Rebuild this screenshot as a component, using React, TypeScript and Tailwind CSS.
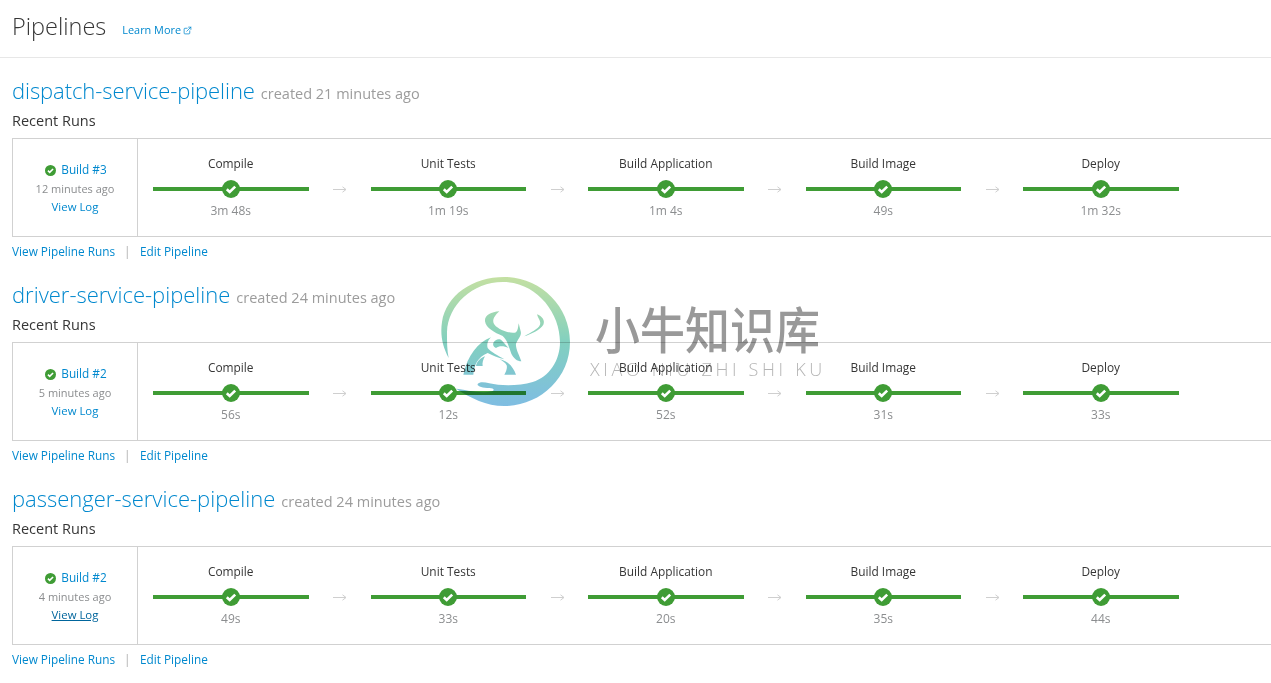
import { ExternalLink } from "lucide-react";

const pipelines = [
  {
    name: "dispatch-service-pipeline",
    created: "created 21 minutes ago",
    build: "Build #3",
    ago: "12 minutes ago",
    times: ["3m 48s", "1m 19s", "1m 4s", "49s", "1m 32s"],
    titleClass: "tracking-[-0.08px]",
  },
  {
    name: "driver-service-pipeline",
    created: "created 24 minutes ago",
    build: "Build #2",
    ago: "5 minutes ago",
    times: ["56s", "12s", "52s", "31s", "33s"],
  },
  {
    name: "passenger-service-pipeline",
    created: "created 24 minutes ago",
    build: "Build #2",
    ago: "4 minutes ago",
    times: ["49s", "33s", "20s", "35s", "44s"],
    hoverLog: true,
  },
];

const stages = ["Compile", "Unit Tests", "Build Application", "Build Image", "Deploy"];

function Check({ size }: { size: number }) {
  return (
    <svg width={size} height={size} viewBox="0 0 18 18" className="block shrink-0">
      <circle cx="9" cy="9" r="9" fill="#3f9c35" />
      <path d="M4.8 9.2 L7.7 12 L13.2 6.6" fill="none" stroke="#fff" strokeWidth="2.6" />
    </svg>
  );
}

function Stage({ name, time }: { name: string; time: string }) {
  return (
    <div className="w-[155.5px] shrink-0 flex flex-col items-center">
      <div className="text-[11.9px] leading-[16px] text-[#363636] h-[18px] whitespace-nowrap">{name}</div>
      <div className="relative w-full h-[18px] mt-[7px] flex items-center justify-center">
        <div className="absolute left-0 right-0 top-[7px] h-[4px] bg-[#3f9c35]" />
        <div className="relative">
          <Check size={18} />
        </div>
      </div>
      <div className="text-[12px] leading-[18px] text-[#8b8d8f] mt-[4px]">{time}</div>
    </div>
  );
}

function Arrow() {
  return (
    <div className="w-[62px] shrink-0 flex justify-center pt-[25px]">
      <svg width="15" height="18" viewBox="0 0 15 18">
        <path d="M1 9.5 H14 M10.5 6.8 L14 9.5 L10.5 12.2" fill="none" stroke="#cfcfcf" strokeWidth="1" />
      </svg>
    </div>
  );
}

function Watermark() {
  return (
    <div className="absolute left-[441px] top-[277px] w-[400px] h-[130px] pointer-events-none mix-blend-multiply">
      <svg width="130" height="130" viewBox="15 15 390 390" className="absolute left-0 top-0">
        <defs>
          <linearGradient id="ring" gradientUnits="userSpaceOnUse" x1="0" y1="15" x2="0" y2="402">
            <stop offset="0" stopColor="#c4e0a2" />
            <stop offset="0.5" stopColor="#82d0bf" />
            <stop offset="1" stopColor="#7fbde2" />
          </linearGradient>
        </defs>
        <g fill="url(#ring)">
          {/* ring with the hand at the bottom */}
          <path d="M38 258 C20 225 12 190 18 150 C30 70 110 15 205 15 C310 15 402 100 402 210 C402 320 310 402 205 402 C150 402 105 378 60 350 C85 352 130 366 168 358 C178 354 172 348 160 348 C140 348 122 342 125 336 C130 329 145 330 160 334 C195 342 250 342 290 330 C340 315 372 265 372 210 C372 120 300 30 200 30 C110 30 35 100 33 180 C33 210 33 235 38 258 Z" />
          {/* bull head with left horn */}
          <path d="M190 118 C165 120 145 130 147 148 C150 168 175 182 200 192 C215 205 218 225 226 245 C232 258 244 268 256 268 C250 250 238 230 240 215 C246 200 258 190 254 178 L248 154 C246 165 246 175 240 181 C228 186 205 178 190 170 C172 160 160 145 190 118 Z" />
          {/* right horn flick */}
          <path d="M303 127 C318 132 328 146 322 158 C312 174 285 186 265 193 C285 180 306 172 312 158 C316 148 306 140 303 127 Z" />
          {/* chest */}
          <path d="M172 212 C178 202 190 198 198 206 C206 214 212 222 218 228 C205 222 190 220 180 228 C172 224 170 218 172 212 Z" />
          {/* body arch and legs */}
          <path d="M165 196 C125 212 95 250 82 308 L112 308 C114 280 125 255 155 243 C170 250 185 258 205 262 C185 250 165 240 155 228 C152 218 155 205 165 196 Z" />
          <path d="M147 253 C132 258 122 270 120 282 L140 282 C138 272 142 262 147 253 Z" />
          <path d="M190 262 C215 266 232 285 240 308 L205 308 C212 296 214 286 212 280 C208 272 198 266 190 262 Z" />
        </g>
      </svg>
      <div
        className="absolute left-[154px] top-[16px] text-[45px] leading-[64px] text-[#999999] whitespace-nowrap font-medium origin-top scale-y-[1.1]"
        style={{ fontFamily: '"Noto Sans CJK SC", sans-serif' }}
      >
        小牛知识库
      </div>
      <div className="absolute left-[149px] top-[80px] text-[18px] leading-[24px] tracking-[3.65px] text-[#b5b5b5] whitespace-nowrap font-light">
        XIAO NIU ZHI SHI KU
      </div>
    </div>
  );
}

export default function App() {
  return (
    <div className="relative w-[1271px] h-[683px] overflow-hidden bg-white font-['Open_Sans',sans-serif]">
      <div className="h-[58px] border-b border-[#e7e7e7] pl-[12px] flex items-start">
        <h1 className="text-[23.5px] leading-[26px] font-light text-[#363636] mt-[13px]">Pipelines</h1>
        <a className="ml-[16px] mt-[22px] text-[10.9px] leading-[16px] text-[#0088ce] flex items-center gap-[2px]">
          Learn More
          <ExternalLink size={9} strokeWidth={2} />
        </a>
      </div>

      {pipelines.map((p) => (
        <section key={p.name} className="h-[204px] pl-[12px] pt-[18px]">
          <div className="flex items-baseline h-[28px]">
            <a className={`text-[22px] leading-[28px] font-light text-[#0088ce] ${p.titleClass ?? ""}`}>{p.name}</a>
            <span className="ml-[6px] text-[14.5px] text-[#9c9c9c]">{p.created}</span>
          </div>
          <div className="mt-[7px] text-[14.5px] leading-[19px] text-[#363636]">Recent Runs</div>
          <div className="mt-[8px] h-[99px] w-[1262px] flex border border-r-0 border-[#d1d1d1]">
            <div className="w-[125px] shrink-0 border-r border-[#d1d1d1] flex flex-col items-center pt-[22px]">
              <div className="flex items-center gap-[5px] h-[18px] pl-[2px]">
                <Check size={11} />
                <a className="text-[11.8px] leading-[16px] pb-[2px] text-[#0088ce]">{p.build}</a>
              </div>
              <div className="text-[11px] leading-[18px] mt-[1px] text-[#8b8d8f]">{p.ago}</div>
              <a
                className={
                  p.hoverLog
                    ? "text-[11.4px] leading-[18px] text-[#00659c] underline"
                    : "text-[11.4px] leading-[18px] text-[#0088ce]"
                }
              >
                View Log
              </a>
            </div>
            <div className="flex pl-[15px] pt-[16px]">
              {stages.map((s, i) => (
                <div key={s} className="flex">
                  <Stage name={s} time={p.times[i]} />
                  {i < stages.length - 1 && <Arrow />}
                </div>
              ))}
            </div>
          </div>
          <div className="mt-[5px] flex items-center text-[11.8px] leading-[18px] text-[#0088ce]">
            <a>View Pipeline Runs</a>
            <span className="ml-[9px] mr-[9.5px] text-[#b0b0b0]">|</span>
            <a>Edit Pipeline</a>
          </div>
        </section>
      ))}

      <Watermark />
    </div>
  );
}
